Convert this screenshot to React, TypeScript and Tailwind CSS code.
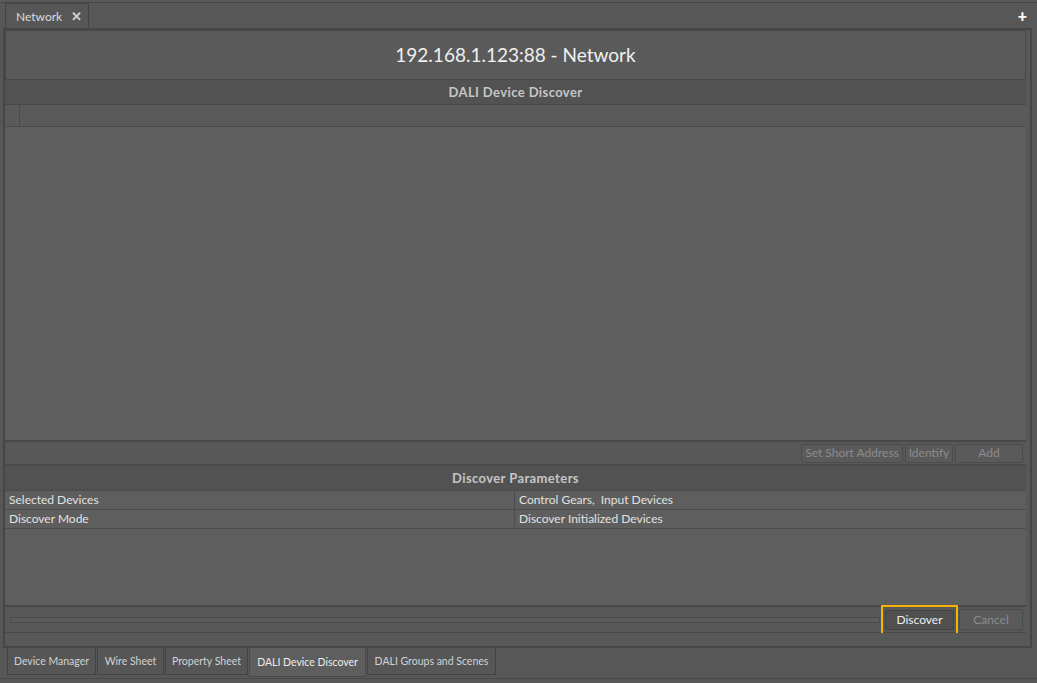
import { useState } from "react"

const font = { fontFamily: "Lato, 'Open Sans', sans-serif" }

const bottomTabs = [
    { label: "Device Manager", w: "w-[89px]" },
    { label: "Wire Sheet", w: "w-[67px]" },
    { label: "Property Sheet", w: "w-[83px]" },
    { label: "DALI Device Discover", w: "w-[117px]" },
    { label: "DALI Groups and Scenes", w: "w-[129px]" },
]

const params = [
    { name: "Selected Devices", value: "Control Gears,  Input Devices" },
    { name: "Discover Mode", value: "Discover Initialized Devices" },
]

const SmallButton = ({ label, className }: { label: string; className: string }) => (
    <button
        disabled
        className={`h-[19px] rounded-[2px] border border-[#4c4c4c] bg-[#5a5a5a] text-[12px] leading-none text-[#8c8c8c] whitespace-pre ${className}`}
    >
        {label}
    </button>
)

export default function App() {
    const [active, setActive] = useState(3)

    return (
        <div className="h-[683px] w-full overflow-hidden bg-[#575757] flex flex-col" style={font}>
            {/* top tab strip */}
            <div className="h-[2px] bg-[#5a5a5a]" />
            <div className="h-px bg-[#464646]" />
            <div className="h-[25px] flex items-end pl-[5px] pr-[10px]">
                <div className="h-[26px] w-[84px] -mb-px border border-b-0 border-[#444444] bg-[#575757] flex items-center pl-[10px] pr-[6px]">
                    <span className="text-[12px] text-[#dcdcdc]">Network</span>
                    <span className="ml-auto text-[13px] font-black text-[#d0d0d0] leading-none">✕</span>
                </div>
                <span className="ml-auto self-center text-[16px] font-black text-white leading-none">+</span>
            </div>

            {/* main frame */}
            <div className="h-[620px] ml-[3px] mr-[5px] border-2 border-[#464646] bg-[#585858] pr-[4px] flex flex-col">
                <div className="h-[50px] shrink-0 border border-[#484848] bg-[#5a5a5a] flex items-center justify-center">
                    <span className="text-[19px] text-[#f0f0f0]">192.168.1.123:88 - Network</span>
                </div>

                <div className="h-[25px] shrink-0 bg-[#525252] border-b border-[#494949] flex items-center justify-center pt-[2px]">
                    <span className="text-[13px] font-bold tracking-[0.4px] text-[#c6c6c6]">DALI Device Discover</span>
                </div>
                <div className="h-[22px] shrink-0 bg-[#5a5a5a] border-b border-[#4a4a4a] flex">
                    <div className="w-[15px] border-r border-[#4a4a4a]" />
                </div>
                <div className="h-[315px] shrink-0 bg-[#5e5e5e] border-b-2 border-[#484848]" />

                <div className="h-[24px] shrink-0 bg-[#585858] border-b-2 border-[#4a4a4a] flex items-center justify-end gap-[2px] pr-[3px]">
                    <SmallButton label="Set Short Address" className="w-[102px]" />
                    <SmallButton label="Identify" className="w-[48px]" />
                    <SmallButton label="Add" className="w-[68px]" />
                </div>

                <div className="h-[25px] shrink-0 bg-[#525252] border-b border-[#4a4a4a] flex items-center justify-center pt-[1px]">
                    <span className="text-[13px] font-bold tracking-[0.4px] text-[#c6c6c6]">Discover Parameters</span>
                </div>
                {params.map((p) => (
                    <div key={p.name} className="h-[19px] shrink-0 bg-[#5e5e5e] border-b border-[#4c4c4c] flex text-[12px] text-[#e2e2e2]">
                        <div className="w-[510px] pl-[4px] flex items-center border-r border-[#4c4c4c]">{p.name}</div>
                        <div className="flex-1 pl-[4px] flex items-center whitespace-pre">{p.value}</div>
                    </div>
                ))}
                <div className="h-[78px] shrink-0 bg-[#5e5e5e] border-b-2 border-[#484848]" />

                <div className="h-[26px] shrink-0 bg-[#585858] border-b border-[#4a4a4a] flex items-center pl-[5px] pr-[3px]">
                    <div className="flex-1 h-[6px] border border-[#4a4a4a] bg-[#5c5c5c]" />
                    <div className="ml-[1px] h-[30px] w-[77px] border-2 border-[#f5b400] flex items-center justify-center">
                        <button className="h-[20px] w-[69px] rounded-[2px] border border-[#444444] bg-[#505050] text-[12px] leading-none text-[#eeeeee]">
                            Discover
                        </button>
                    </div>
                    <SmallButton label="Cancel" className="ml-[1px] w-[64px] h-[21px]" />
                </div>
                <div className="flex-1 bg-[#585858]" />
            </div>

            {/* bottom view tabs */}
            <div className="h-[29px] flex items-start pl-[7px] gap-[1px]">
                {bottomTabs.map((t, i) => (
                    <button
                        key={t.label}
                        onClick={() => setActive(i)}
                        className={`${t.w} flex items-center justify-center whitespace-nowrap text-[10.5px] border border-t-0 pt-[1px] ${
                            i === active
                                ? "h-[29px] bg-[#5e5e5e] border-[#4a4a4a] text-[#ececec]"
                                : "h-[27px] bg-[#565656] border-[#444444] text-[#d2d2d2]"
                        }`}
                    >
                        {t.label}
                    </button>
                ))}
            </div>
            <div className="h-px bg-[#484848] mt-[1px]" />
            <div className="flex-1 bg-[#575757]" />
        </div>
    )
}
